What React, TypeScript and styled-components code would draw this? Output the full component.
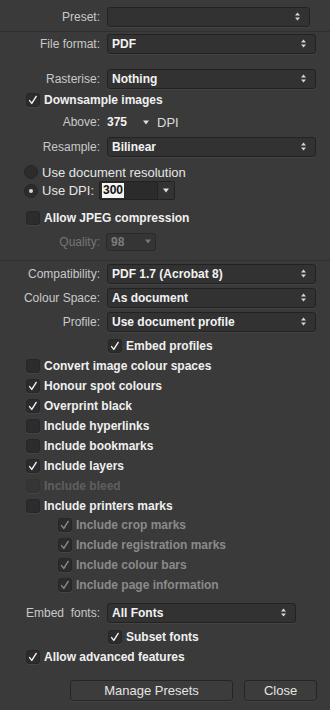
import styled, { createGlobalStyle } from 'styled-components';

const GlobalStyle = createGlobalStyle`
  html, body {
    margin: 0;
    padding: 0;
    background: #3a3a3a;
  }
`;

const Panel = styled.div`
  width: 330px;
  height: 710px;
  box-sizing: border-box;
  padding-top: 7px;
  background: #3a3a3a;
  font-family: 'Liberation Sans', Arial, sans-serif;
  display: flex;
  flex-direction: column;
  overflow: hidden;
`;

const FieldRow = styled.div<{ $h?: number; $mt?: number }>`
  display: grid;
  grid-template-columns: 100px auto;
  column-gap: 7px;
  align-items: center;
  height: ${(p) => p.$h ?? 20}px;
  margin-top: ${(p) => p.$mt ?? 0}px;
`;

const Label = styled.span<{ $disabled?: boolean }>`
  text-align: right;
  font-size: 12px;
  color: ${(p) => (p.$disabled ? '#757575' : '#c9c9c9')};
  white-space: pre;
`;

const Divider = styled.div<{ $mt: number; $mb: number }>`
  height: 1px;
  background: #2f2f2f;
  margin-top: ${(p) => p.$mt}px;
  margin-bottom: ${(p) => p.$mb}px;
`;

const Select = styled.div<{ $w: number }>`
  position: relative;
  box-sizing: border-box;
  width: ${(p) => p.$w}px;
  height: 20px;
  padding-left: 4px;
  display: flex;
  align-items: center;
  background: #323232;
  border: 1px solid #222222;
  border-radius: 3px;
  box-shadow: 0 1px 0 rgba(255, 255, 255, 0.05);
  font-size: 12px;
  font-weight: 700;
  color: #f2f2f2;
  svg {
    position: absolute;
    right: 9px;
    top: 4px;
  }
`;

const Inline = styled.div`
  display: flex;
  align-items: center;
`;

const PlainValue = styled.span`
  font-size: 12px;
  font-weight: 700;
  color: #f2f2f2;
  width: 36px;
`;

const Unit = styled.span`
  font-size: 13px;
  color: #dcdcdc;
  margin-left: 8px;
`;

const CheckRow = styled.div<{ $indent: number; $mt?: number; $h?: number }>`
  display: flex;
  align-items: center;
  gap: 4px;
  height: ${(p) => p.$h ?? 20}px;
  margin-top: ${(p) => p.$mt ?? 0}px;
  padding-left: ${(p) => p.$indent}px;
`;

const Box = styled.div<{ $dim?: boolean }>`
  width: 14px;
  height: 14px;
  box-sizing: border-box;
  border-radius: 3px;
  background: ${(p) => (p.$dim ? '#353535' : '#2c2c2c')};
  border: 1px solid ${(p) => (p.$dim ? '#323232' : '#262626')};
  box-shadow: 0 1px 0 rgba(255, 255, 255, 0.05);
  display: flex;
  align-items: center;
  justify-content: center;
`;

const CheckText = styled.span<{ $tone?: 'normal' | 'grey' | 'faint' }>`
  font-size: 12px;
  font-weight: 700;
  color: ${(p) => (p.$tone === 'faint' ? '#5f5f5f' : p.$tone === 'grey' ? '#8a8a8a' : '#f0f0f0')};
  white-space: nowrap;
`;

const Radio = styled.div`
  width: 14px;
  height: 14px;
  box-sizing: border-box;
  border-radius: 50%;
  background: #2c2c2c;
  border: 1px solid #262626;
  display: flex;
  align-items: center;
  justify-content: center;
`;

const RadioDot = styled.div`
  width: 4px;
  height: 4px;
  border-radius: 50%;
  background: #d8d8d8;
`;

const RadioText = styled.span`
  font-size: 13px;
  color: #e6e6e6;
  white-space: nowrap;
`;

const DpiCombo = styled.div`
  margin-left: 1px;
  box-sizing: border-box;
  width: 76px;
  height: 19px;
  display: flex;
  background: #2b2b2b;
  border: 1px solid #222222;
  border-radius: 2px;
`;

const DpiField = styled.div`
  flex: 1;
  display: flex;
  align-items: center;
  padding-left: 2px;
`;

const Highlight = styled.span`
  background: #f4f4f4;
  color: #111111;
  font-size: 12px;
  font-weight: 700;
  padding: 0 1px;
  line-height: 15px;
`;

const ComboArrow = styled.div`
  width: 16px;
  border-left: 1px solid #222222;
  background: #333333;
  display: flex;
  align-items: center;
  justify-content: center;
`;

const SmallCombo = styled.div`
  position: relative;
  box-sizing: border-box;
  width: 50px;
  height: 18px;
  margin-left: -1px;
  padding-left: 4px;
  display: flex;
  align-items: center;
  background: #353535;
  border: 1px solid #2a2a2a;
  border-radius: 3px;
  font-size: 12px;
  font-weight: 700;
  color: #7c7c7c;
  svg {
    position: absolute;
    right: 4px;
    top: 5px;
  }
`;

const ButtonBar = styled.div`
  display: flex;
  gap: 11px;
  padding-left: 70px;
  margin-top: 13px;
`;

const Button = styled.div<{ $w: number }>`
  box-sizing: border-box;
  width: ${(p) => p.$w}px;
  height: 21px;
  display: flex;
  align-items: center;
  justify-content: center;
  background: #3c3c3c;
  border: 1px solid #252525;
  border-radius: 3px;
  box-shadow: 0 1px 0 rgba(255, 255, 255, 0.05);
  font-size: 13px;
  color: #e4e4e4;
`;

const Steppers = () => (
  <svg width="5" height="9" viewBox="0 0 5 9">
    <polygon points="0,3.5 2.5,0.5 5,3.5" fill="#d6d6d6" />
    <polygon points="0,5.5 2.5,8.5 5,5.5" fill="#d6d6d6" />
  </svg>
);

const DownArrow = ({ color = '#e0e0e0' }: { color?: string }) => (
  <svg width="6" height="5" viewBox="0 0 6 5">
    <polygon points="0,0.5 6,0.5 3,4.5" fill={color} />
  </svg>
);

const Tick = ({ color = '#f2f2f2' }: { color?: string }) => (
  <svg width="12" height="12" viewBox="0 0 12 12">
    <path d="M2.6 6.6 L4.8 9.4 L9.2 2.4" fill="none" stroke={color} strokeWidth="1.4" strokeLinecap="round" strokeLinejoin="round" />
  </svg>
);

interface ICheckProps {
  label: string;
  indent: number;
  checked?: boolean;
  tone?: 'normal' | 'grey' | 'faint';
  mt?: number;
}

const Check = ({ label, indent, checked, tone = 'normal', mt }: ICheckProps) => (
  <CheckRow $indent={indent} $mt={mt}>
    <Box $dim={tone === 'faint'}>{checked ? <Tick color={tone === 'grey' ? '#8c8c8c' : '#f2f2f2'} /> : null}</Box>
    <CheckText $tone={tone}>{label}</CheckText>
  </CheckRow>
);

const marks = ['Include crop marks', 'Include registration marks', 'Include colour bars', 'Include page information'];

export default function App(): JSX.Element {
  return (
    <Panel>
      <GlobalStyle />
      <FieldRow>
        <Label>Preset:</Label>
        <Select $w={203}>
          <Steppers />
        </Select>
      </FieldRow>
      <Divider $mt={4} $mb={2} />
      <FieldRow>
        <Label>File format:</Label>
        <Select $w={209}>
          PDF
          <Steppers />
        </Select>
      </FieldRow>
      <FieldRow $mt={15}>
        <Label>Rasterise:</Label>
        <Select $w={209}>
          Nothing
          <Steppers />
        </Select>
      </FieldRow>
      <Check label="Downsample images" indent={26} checked mt={1} />
      <FieldRow $mt={2}>
        <Label>Above:</Label>
        <Inline>
          <PlainValue>375</PlainValue>
          <DownArrow />
          <Unit>DPI</Unit>
        </Inline>
      </FieldRow>
      <FieldRow $mt={5}>
        <Label>Resample:</Label>
        <Select $w={209}>
          Bilinear
          <Steppers />
        </Select>
      </FieldRow>
      <CheckRow $indent={24} $mt={6} $h={18}>
        <Radio />
        <RadioText>Use document resolution</RadioText>
      </CheckRow>
      <CheckRow $indent={24} $h={19}>
        <Radio>
          <RadioDot />
        </Radio>
        <RadioText>Use DPI:</RadioText>
        <DpiCombo>
          <DpiField>
            <Highlight>300</Highlight>
          </DpiField>
          <ComboArrow>
            <DownArrow />
          </ComboArrow>
        </DpiCombo>
      </CheckRow>
      <Check label="Allow JPEG compression" indent={26} mt={8} />
      <FieldRow $h={18} $mt={5}>
        <Label $disabled>Quality:</Label>
        <SmallCombo>
          98
          <DownArrow color="#777777" />
        </SmallCombo>
      </FieldRow>
      <Divider $mt={9} $mb={3} />
      <FieldRow>
        <Label>Compatibility:</Label>
        <Select $w={209}>
          PDF 1.7 (Acrobat 8)
          <Steppers />
        </Select>
      </FieldRow>
      <FieldRow $mt={4}>
        <Label>Colour Space:</Label>
        <Select $w={209}>
          As document
          <Steppers />
        </Select>
      </FieldRow>
      <FieldRow $mt={4}>
        <Label>Profile:</Label>
        <Select $w={209}>
          Use document profile
          <Steppers />
        </Select>
      </FieldRow>
      <Check label="Embed profiles" indent={108} checked mt={4} />
      <Check label="Convert image colour spaces" indent={26} />
      <Check label="Honour spot colours" indent={26} checked />
      <Check label="Overprint black" indent={26} checked />
      <Check label="Include hyperlinks" indent={26} />
      <Check label="Include bookmarks" indent={26} />
      <Check label="Include layers" indent={26} checked />
      <Check label="Include bleed" indent={26} tone="faint" />
      <Check label="Include printers marks" indent={26} />
      {marks.map((m, i) => (
        <Check key={m} label={m} indent={58} checked tone="grey" mt={i === 0 ? -1 : 0} />
      ))}
      <FieldRow $mt={8}>
        <Label>{'Embed  fonts:'}</Label>
        <Select $w={189}>
          All Fonts
          <Steppers />
        </Select>
      </FieldRow>
      <Check label="Subset fonts" indent={108} checked mt={4} />
      <Check label="Allow advanced features" indent={26} checked />
      <ButtonBar>
        <Button $w={163}>Manage Presets</Button>
        <Button $w={73}>Close</Button>
      </ButtonBar>
    </Panel>
  );
}
